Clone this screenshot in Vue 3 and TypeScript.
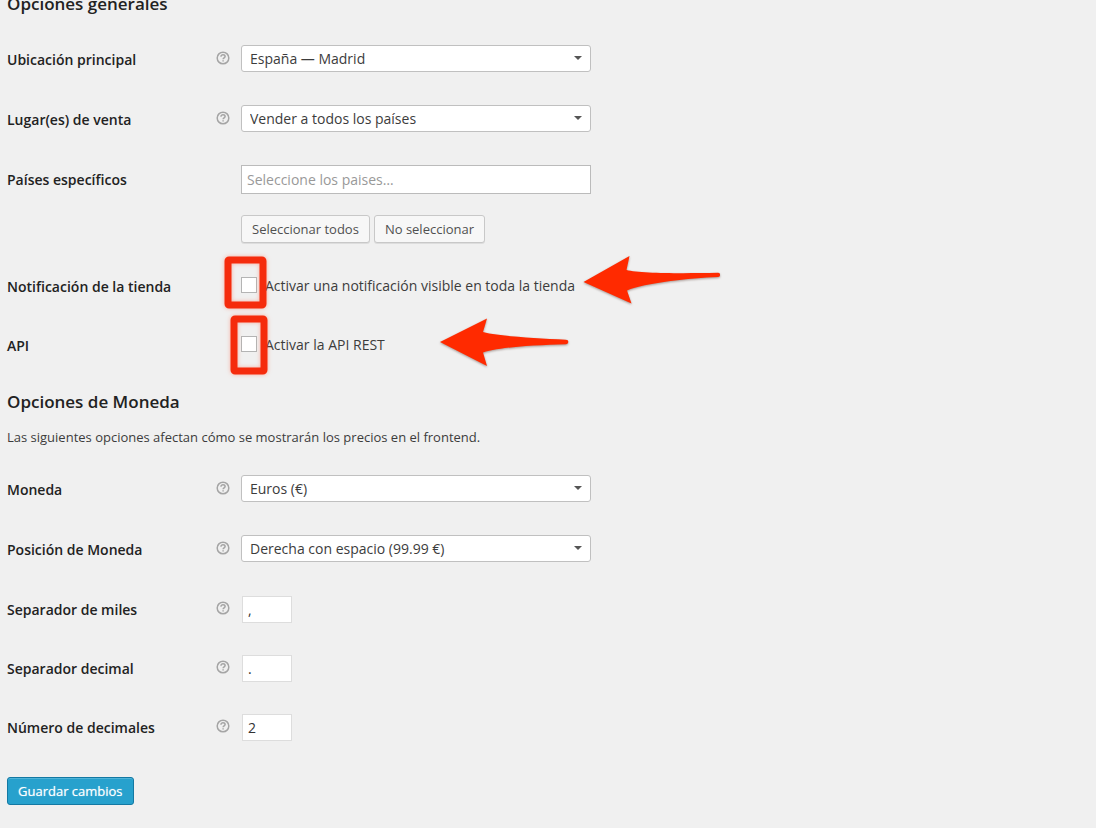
<script setup lang="ts">
import { ref } from 'vue'

interface SelectRow {
  id: string
  label: string
  options: string[]
}
interface ToggleRow {
  id: string
  label: string
  text: string
}
interface NumberRow {
  id: string
  label: string
  value: string
}

const locationRows: SelectRow[] = [
  { id: 'base', label: 'Ubicación principal', options: ['España — Madrid'] },
  { id: 'sales', label: 'Lugar(es) de venta', options: ['Vender a todos los países'] },
]
const toggleRows: ToggleRow[] = [
  { id: 'notice', label: 'Notificación de la tienda', text: 'Activar una notificación visible en toda la tienda' },
  { id: 'api', label: 'API', text: 'Activar la API REST' },
]
const currencyRows: SelectRow[] = [
  { id: 'currency', label: 'Moneda', options: ['Euros (€)'] },
  { id: 'position', label: 'Posición de Moneda', options: ['Derecha con espacio (99.99 €)'] },
]
const numberRows = ref<NumberRow[]>([
  { id: 'thousand', label: 'Separador de miles', value: ',' },
  { id: 'decimal', label: 'Separador decimal', value: '.' },
  { id: 'decimals', label: 'Número de decimales', value: '2' },
])
const countries = ref('')
const enabled = ref<string[]>([])
</script>

<template>
  <form class="page" @submit.prevent>
    <h3 class="heading first">Opciones generales</h3>

    <div v-for="row in locationRows" :key="row.id" class="row">
      <label class="name" :for="row.id">{{ row.label }}</label>
      <svg class="help" viewBox="0 0 14 14" aria-hidden="true">
        <circle cx="7" cy="7" r="5.8" />
        <path d="M5 5.7C5 4.4 5.8 3.8 7 3.8s2.1.7 2.1 1.7c0 1.3-2 1.4-2 2.7" />
        <path d="M7.1 9.3v1.3" />
      </svg>
      <div class="picker">
        <select :id="row.id">
          <option v-for="option in row.options" :key="option">{{ option }}</option>
        </select>
        <svg class="caret" viewBox="0 0 8 4" aria-hidden="true"><path d="M0 0h8L4 4z" /></svg>
      </div>
    </div>

    <div class="row">
      <label class="name" for="countries">Países específicos</label>
      <div class="field">
        <input id="countries" v-model="countries" class="countries" type="text" placeholder="Seleccione los paises…" />
        <div class="actions">
          <button type="button" class="button">Seleccionar todos</button>
          <button type="button" class="button">No seleccionar</button>
        </div>
      </div>
    </div>

    <div v-for="row in toggleRows" :key="row.id" class="row compact">
      <span class="name">{{ row.label }}</span>
      <label class="toggle">
        <input v-model="enabled" type="checkbox" :value="row.id" />
        <span>{{ row.text }}</span>
      </label>
    </div>

    <h3 class="heading">Opciones de Moneda</h3>
    <p class="description">Las siguientes opciones afectan cómo se mostrarán los precios en el frontend.</p>

    <div v-for="row in currencyRows" :key="row.id" class="row">
      <label class="name" :for="row.id">{{ row.label }}</label>
      <svg class="help" viewBox="0 0 14 14" aria-hidden="true">
        <circle cx="7" cy="7" r="5.8" />
        <path d="M5 5.7C5 4.4 5.8 3.8 7 3.8s2.1.7 2.1 1.7c0 1.3-2 1.4-2 2.7" />
        <path d="M7.1 9.3v1.3" />
      </svg>
      <div class="picker">
        <select :id="row.id">
          <option v-for="option in row.options" :key="option">{{ option }}</option>
        </select>
        <svg class="caret" viewBox="0 0 8 4" aria-hidden="true"><path d="M0 0h8L4 4z" /></svg>
      </div>
    </div>

    <div v-for="row in numberRows" :key="row.id" class="row compact">
      <label class="name" :for="row.id">{{ row.label }}</label>
      <svg class="help" viewBox="0 0 14 14" aria-hidden="true">
        <circle cx="7" cy="7" r="5.8" />
        <path d="M5 5.7C5 4.4 5.8 3.8 7 3.8s2.1.7 2.1 1.7c0 1.3-2 1.4-2 2.7" />
        <path d="M7.1 9.3v1.3" />
      </svg>
      <input :id="row.id" v-model="row.value" class="small" type="text" />
    </div>

    <button type="submit" class="button primary">Guardar cambios</button>

    <svg class="marks" width="740" height="400" viewBox="0 0 740 400" aria-hidden="true">
      <g class="frames">
        <rect x="228" y="260" width="35" height="45" rx="1" />
        <rect x="234" y="319" width="30" height="52" rx="1" />
      </g>
      <g class="arrows">
        <path d="M583.5 282 629.5 256 626.5 270C640 273.500 680 273.500 718 272.800Q720.500 273 720 275.500 720 276.800 718 277C690 278 645 283 627 290.500L631.500 303.500Z" />
        <path d="M440 342 487 318.500 483 332C500 336.500 535 338 566 339.800Q568.500 340 568.300 342 568.300 344 566 344.200C535 345 500 347 483 352.500L487 366Z" />
      </g>
    </svg>
  </form>
</template>

<style>
body {
  margin: 0;
  background: #f0f0f0;
}
</style>

<style scoped>
.page {
  position: relative;
  overflow: hidden;
  padding: 0 7px 23px;
  background: #f0f0f0;
  color: #3c3c3c;
  font: 14px/20px "Open Sans", "Noto Sans", sans-serif;
}
.heading {
  margin: 18px 0 16px;
  color: #222;
  font-size: 17px;
  font-weight: 600;
  line-height: 20px;
}
.heading.first {
  margin: -6px 0 15px;
}
.description {
  margin: 0 0 12px;
  font-size: 13px;
  line-height: 19px;
}
.row {
  display: grid;
  grid-template-columns: 209px 25px minmax(0, 350px);
  align-items: start;
  min-height: 60px;
}
.row.compact {
  min-height: 59px;
}
.name {
  grid-column: 1;
  padding-top: 21px;
  color: #222;
  font-weight: 600;
}
.help {
  width: 14px;
  height: 14px;
  margin-top: 22px;
  fill: none;
  stroke: #a5a5a5;
  stroke-width: 1.5;
}
.picker {
  position: relative;
  grid-column: 3;
  margin-top: 16px;
}
select,
input,
button {
  box-sizing: border-box;
  margin: 0;
  font: inherit;
}
select {
  display: block;
  width: 100%;
  height: 27px;
  padding: 0 24px 0 8px;
  border: 1px solid #c0c0c0;
  border-radius: 3px;
  background: #fff;
  color: #3c3c3c;
  appearance: none;
}
.caret {
  position: absolute;
  top: 11px;
  right: 9px;
  width: 8px;
  height: 4px;
  fill: #555;
  pointer-events: none;
}
.field {
  grid-column: 3;
  padding: 16px 0 13px;
}
.countries {
  display: block;
  width: 100%;
  height: 29px;
  padding: 0 5px;
  border: 1px solid #bbb;
  background: #fff;
  color: #3c3c3c;
}
.countries::placeholder {
  color: #999;
  opacity: 1;
}
.actions {
  display: flex;
  gap: 4px;
  margin-top: 21px;
}
.button {
  height: 28px;
  padding: 0 10px;
  border: 1px solid #c8c8c8;
  border-radius: 3px;
  background: #f7f7f7;
  box-shadow: 0 1px 0 rgba(0, 0, 0, 0.08);
  color: #505050;
  font-size: 13px;
  line-height: 26px;
  white-space: nowrap;
}
.button.primary {
  display: block;
  margin-top: 21px;
  border-color: #1479a3;
  background: #27a1cd;
  box-shadow: inset 0 1px 0 rgba(120, 200, 230, 0.5);
  color: #fff;
  text-shadow: 0 0 1px rgba(255, 255, 255, 0.6);
}
.toggle {
  display: flex;
  grid-column: 3;
  align-items: flex-start;
  gap: 8px;
  margin-top: 20px;
  white-space: nowrap;
}
.toggle input {
  flex: none;
  width: 16px;
  height: 16px;
  margin-top: 1px;
  border: 1px solid #b4b4b4;
  background: #fff;
  appearance: none;
}
.toggle input:checked {
  background: #27a1cd;
}
.small {
  width: 50px;
  height: 27px;
  margin: 17px 0 0 1px;
  padding: 0 5px;
  border: 1px solid #ddd;
  background: #fff;
  color: #333;
}
.marks {
  position: absolute;
  top: 0;
  left: 0;
  pointer-events: none;
}
.frames {
  fill: none;
  stroke: #f52b0c;
  stroke-width: 7;
  stroke-linejoin: round;
  filter: drop-shadow(0 0 2px rgba(255, 110, 80, 0.5));
}
.arrows {
  fill: #ff2a00;
  filter: drop-shadow(0 1px 1px rgba(90, 60, 50, 0.5));
}
</style>
